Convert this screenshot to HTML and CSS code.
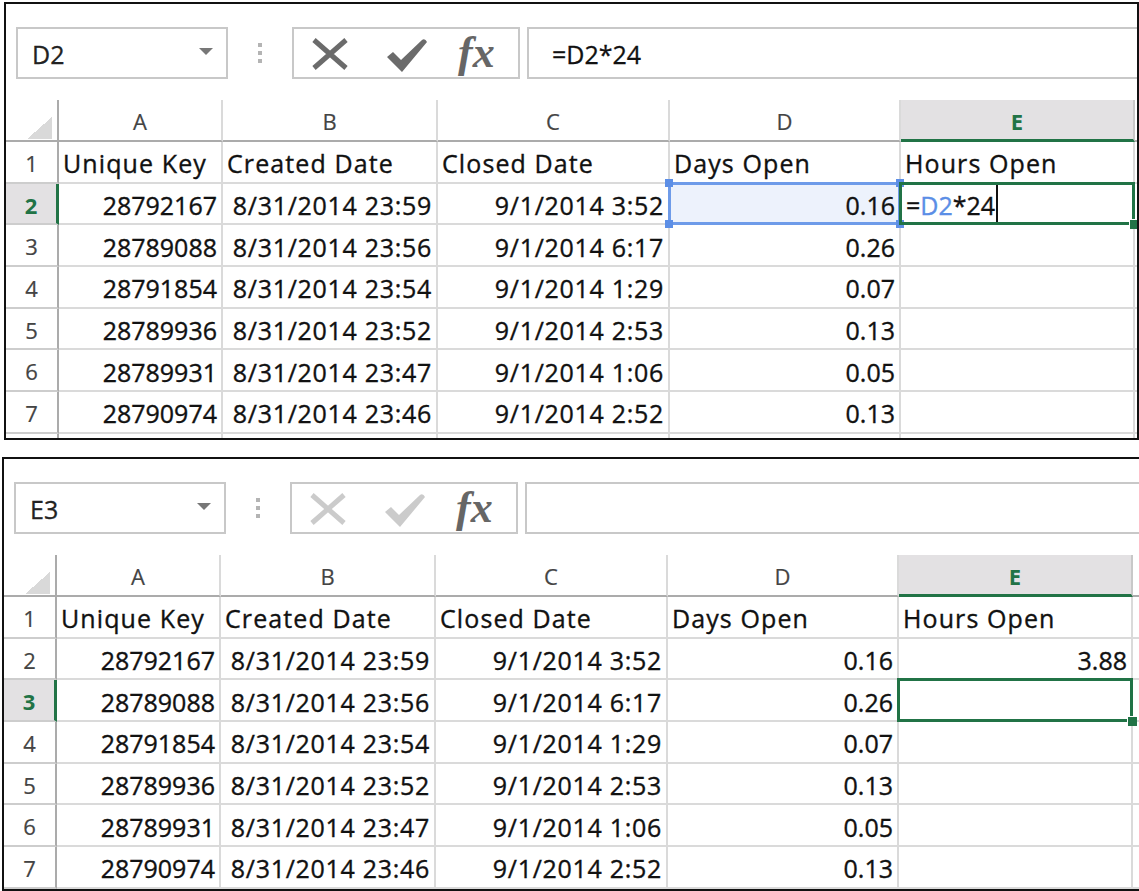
FILE: index.html
```html
<!DOCTYPE html>
<html>
<head>
<meta charset="utf-8">
<link rel="stylesheet" href="styles.css">
</head>
<body>
<div class="page">
  <section class="panel top">
    <div class="fbar">
      <div class="namebox"><span class="nb-text">D2</span><span class="nb-arrow"></span></div>
      <div class="grip"><i></i><i></i><i></i></div>
      <div class="fxbox">
        <svg class="ic-x" width="36" height="32" viewBox="0 0 36 32"><path d="M2 2 L34 30 M34 2 L2 30" stroke="currentColor" stroke-width="5" fill="none"/></svg>
        <svg class="ic-check" width="40" height="34" viewBox="0 0 40 34"><path d="M0 19 L6 14 L14 22 L35 2 Q38 0 40 4 L15 34 Z" fill="currentColor"/></svg>
        <span class="fx">fx</span>
      </div>
      <div class="formula">=D2*24</div>
    </div>
    <div class="sheet">
      <div class="corner"><span class="tri"></span></div>
      <div class="ch">A</div><div class="ch">B</div><div class="ch">C</div><div class="ch">D</div><div class="ch sel">E</div><div class="ch last"></div>

      <div class="rh">1</div>
      <div class="c txt">Unique Key</div><div class="c txt">Created Date</div><div class="c txt">Closed Date</div><div class="c txt">Days Open</div><div class="c txt">Hours Open</div><div class="c last"></div>

      <div class="rh sel">2</div>
      <div class="c num">28792167</div><div class="c num date">8/31/2014 23:59</div><div class="c num date">9/1/2014 3:52</div>
      <div class="c num range">0.16<span class="hd tl"></span><span class="hd tr"></span><span class="hd bl"></span><span class="hd br"></span></div>
      <div class="c txt active edit">=<span class="ref">D2</span>*24<span class="caret"></span></div><div class="c last"></div>

      <div class="rh">3</div>
      <div class="c num">28789088</div><div class="c num date">8/31/2014 23:56</div><div class="c num date">9/1/2014 6:17</div><div class="c num">0.26</div><div class="c"></div><div class="c last"></div>

      <div class="rh">4</div>
      <div class="c num">28791854</div><div class="c num date">8/31/2014 23:54</div><div class="c num date">9/1/2014 1:29</div><div class="c num">0.07</div><div class="c"></div><div class="c last"></div>

      <div class="rh">5</div>
      <div class="c num">28789936</div><div class="c num date">8/31/2014 23:52</div><div class="c num date">9/1/2014 2:53</div><div class="c num">0.13</div><div class="c"></div><div class="c last"></div>

      <div class="rh">6</div>
      <div class="c num">28789931</div><div class="c num date">8/31/2014 23:47</div><div class="c num date">9/1/2014 1:06</div><div class="c num">0.05</div><div class="c"></div><div class="c last"></div>

      <div class="rh">7</div>
      <div class="c num">28790974</div><div class="c num date">8/31/2014 23:46</div><div class="c num date">9/1/2014 2:52</div><div class="c num">0.13</div><div class="c"></div><div class="c last"></div>

      <div class="rh"></div>
      <div class="c"></div><div class="c"></div><div class="c"></div><div class="c"></div><div class="c"></div><div class="c last"></div>
    </div>
  </section>

  <section class="panel bottom">
    <div class="fbar">
      <div class="namebox"><span class="nb-text">E3</span><span class="nb-arrow"></span></div>
      <div class="grip"><i></i><i></i><i></i></div>
      <div class="fxbox disabled">
        <svg class="ic-x" width="36" height="32" viewBox="0 0 36 32"><path d="M2 2 L34 30 M34 2 L2 30" stroke="currentColor" stroke-width="5" fill="none"/></svg>
        <svg class="ic-check" width="40" height="34" viewBox="0 0 40 34"><path d="M0 19 L6 14 L14 22 L35 2 Q38 0 40 4 L15 34 Z" fill="currentColor"/></svg>
        <span class="fx">fx</span>
      </div>
      <div class="formula"></div>
    </div>
    <div class="sheet">
      <div class="corner"><span class="tri"></span></div>
      <div class="ch">A</div><div class="ch">B</div><div class="ch">C</div><div class="ch">D</div><div class="ch sel">E</div><div class="ch last"></div>

      <div class="rh">1</div>
      <div class="c txt">Unique Key</div><div class="c txt">Created Date</div><div class="c txt">Closed Date</div><div class="c txt">Days Open</div><div class="c txt">Hours Open</div><div class="c last"></div>

      <div class="rh">2</div>
      <div class="c num">28792167</div><div class="c num date">8/31/2014 23:59</div><div class="c num date">9/1/2014 3:52</div><div class="c num">0.16</div><div class="c num">3.88</div><div class="c last"></div>

      <div class="rh sel">3</div>
      <div class="c num">28789088</div><div class="c num date">8/31/2014 23:56</div><div class="c num date">9/1/2014 6:17</div><div class="c num">0.26</div><div class="c active"></div><div class="c last"></div>

      <div class="rh">4</div>
      <div class="c num">28791854</div><div class="c num date">8/31/2014 23:54</div><div class="c num date">9/1/2014 1:29</div><div class="c num">0.07</div><div class="c"></div><div class="c last"></div>

      <div class="rh">5</div>
      <div class="c num">28789936</div><div class="c num date">8/31/2014 23:52</div><div class="c num date">9/1/2014 2:53</div><div class="c num">0.13</div><div class="c"></div><div class="c last"></div>

      <div class="rh">6</div>
      <div class="c num">28789931</div><div class="c num date">8/31/2014 23:47</div><div class="c num date">9/1/2014 1:06</div><div class="c num">0.05</div><div class="c"></div><div class="c last"></div>

      <div class="rh">7</div>
      <div class="c num">28790974</div><div class="c num date">8/31/2014 23:46</div><div class="c num date">9/1/2014 2:52</div><div class="c num">0.13</div><div class="c"></div><div class="c last"></div>
    </div>
  </section>
</div>
</body>
</html>
```
FILE: styles.css
```css
* { box-sizing: border-box; }
html, body { margin: 0; padding: 0; background: #fff; }
body {
  width: 1139px;
  height: 891px;
  overflow: hidden;
  font-family: "Open Sans", "Noto Sans", sans-serif;
  color: #111;
}
.page {
  display: flex;
  flex-direction: column;
  padding-top: 2px;
}
.panel {
  border: 2px solid #111;
  background: #fff;
  overflow: hidden;
}
.panel.top { margin-left: 4px; width: 1135px; }
.panel.bottom { margin-left: 2px; margin-top: 17px; width: 1150px; }

/* formula bar */
.fbar {
  display: flex;
  align-items: center;
  height: 52px;
  margin-top: 23px;
  padding-left: 10px;
}
.namebox {
  width: 212px;
  height: 52px;
  border: 2px solid #c8c8c8;
  display: flex;
  align-items: center;
  justify-content: space-between;
  padding: 0 13px 0 14px;
  font-size: 25px;
  color: #222;
  -webkit-text-stroke: 0.3px #222;
}
.nb-text { line-height: 1; padding-top: 2px; }
.nb-arrow {
  width: 0; height: 0;
  border-left: 7px solid transparent;
  border-right: 7px solid transparent;
  border-top: 7px solid #777;
  margin-bottom: 4px;
}
.grip {
  width: 4px;
  margin: 0 30px;
  display: flex;
  flex-direction: column;
  gap: 4px;
}
.grip i { display: block; width: 4px; height: 4px; background: #b4b4b4; }
.fxbox {
  width: 228px;
  height: 52px;
  border: 2px solid #c8c8c8;
  display: flex;
  align-items: center;
  padding-left: 18px;
  color: #6b6b6b;
}
.fxbox .ic-x { margin-top: 2px; }
.fxbox .ic-check { margin-left: 39px; margin-top: 3px; }
.fxbox .fx {
  margin-left: 31px;
  font-family: "Liberation Serif", "DejaVu Serif", serif;
  font-style: italic;
  font-weight: 700;
  font-size: 44px;
  line-height: 1;
  color: #666;
  letter-spacing: 0px;
}
.fxbox.disabled .ic-x, .fxbox.disabled .ic-check { color: #cbcbcb; }
.formula {
  flex: 1;
  height: 52px;
  margin-left: 7px;
  border: 2px solid #c8c8c8;
  border-right: none;
  display: flex;
  align-items: center;
  padding: 2px 0 0 23px;
  font-size: 25px;
  color: #111;
  -webkit-text-stroke: 0.3px #111;
}

/* sheet grid */
.sheet {
  display: grid;
  grid-template-columns: 53px 164px 215px 232px 231px 234px 1fr;
  grid-template-rows: 42px;
  grid-auto-rows: 41.7px;
  margin-top: 21px;
  overflow: hidden;
}
.top .sheet { height: 338px; }
.bottom .sheet { height: 334px; }

.corner {
  border-right: 2px solid #ababab;
  border-bottom: 2px solid #ababab;
  display: flex;
  justify-content: flex-end;
  align-items: flex-end;
  padding: 0 5px 1px 0;
}
.tri {
  width: 25px;
  height: 22px;
  background: linear-gradient(to bottom right, transparent 50%, #d9d9d9 50%);
}
.ch {
  border-right: 2px solid #dadada;
  border-bottom: 2px solid #ababab;
  display: flex;
  align-items: center;
  justify-content: center;
  font-size: 22px;
  color: #444;
  padding-top: 2px;
  -webkit-text-stroke: 0.2px #444;
}
.ch.sel {
  background: #e3e1e3;
  color: #217346;
  font-weight: 700;
  border-bottom: 3px solid #217346;
  border-right-color: #c8c8c8;
  -webkit-text-stroke: 0;
}
.ch.last { border-right: none; }
.rh {
  border-right: 2px solid #ababab;
  border-bottom: 2px solid #cdcdcd;
  display: flex;
  align-items: center;
  justify-content: center;
  font-size: 22px;
  color: #444;
  padding-top: 2px;
  -webkit-text-stroke: 0.2px #444;
}
.rh.sel {
  background: #e3e1e3;
  color: #217346;
  font-weight: 700;
  border-right: 3px solid #217346;
  -webkit-text-stroke: 0;
}
.c {
  border-right: 2px solid #dadada;
  border-bottom: 2px solid #dadada;
  display: flex;
  align-items: center;
  padding: 3px 4px 0;
  font-size: 25px;
  white-space: nowrap;
  color: #111;
  -webkit-text-stroke: 0.35px #111;
}
.c.last { border-right: none; }
.c.txt { letter-spacing: 1.1px; }
.c.num { justify-content: flex-end; }
.c.date { letter-spacing: 0.7px; }

/* D2 range reference */
.c.range { position: relative; background: #edf2fc; }
.c.range::after {
  content: "";
  position: absolute;
  left: -2px; top: -2px; right: -2px; bottom: -2px;
  border: 3px solid #6e9be9;
  z-index: 2;
}
.hd {
  position: absolute;
  width: 8px; height: 8px;
  background: #5d8fe6;
  z-index: 3;
}
.hd.tl { left: -5px; top: -5px; }
.hd.tr { right: -5px; top: -5px; }
.hd.bl { left: -5px; bottom: -5px; }
.hd.br { right: -5px; bottom: -5px; }

/* active cell */
.c.active { position: relative; }
.c.active::after {
  content: "";
  position: absolute;
  left: -2px; top: -2px; right: -2px; bottom: -2px;
  border: 3px solid #217346;
  z-index: 4;
}
.c.active::before {
  content: "";
  position: absolute;
  right: -6px; bottom: -6px;
  width: 9px; height: 9px;
  background: #217346;
  box-shadow: -1px -1px 0 #fff;
  z-index: 5;
}
.c.edit { padding-left: 5px; letter-spacing: 0; }
.ref { color: #5b8ee6; -webkit-text-stroke-color: #5b8ee6; }
.caret {
  display: inline-block;
  width: 2px;
  height: 40px;
  background: #111;
  margin-left: 1px;
  margin-top: -3px;
}
```
